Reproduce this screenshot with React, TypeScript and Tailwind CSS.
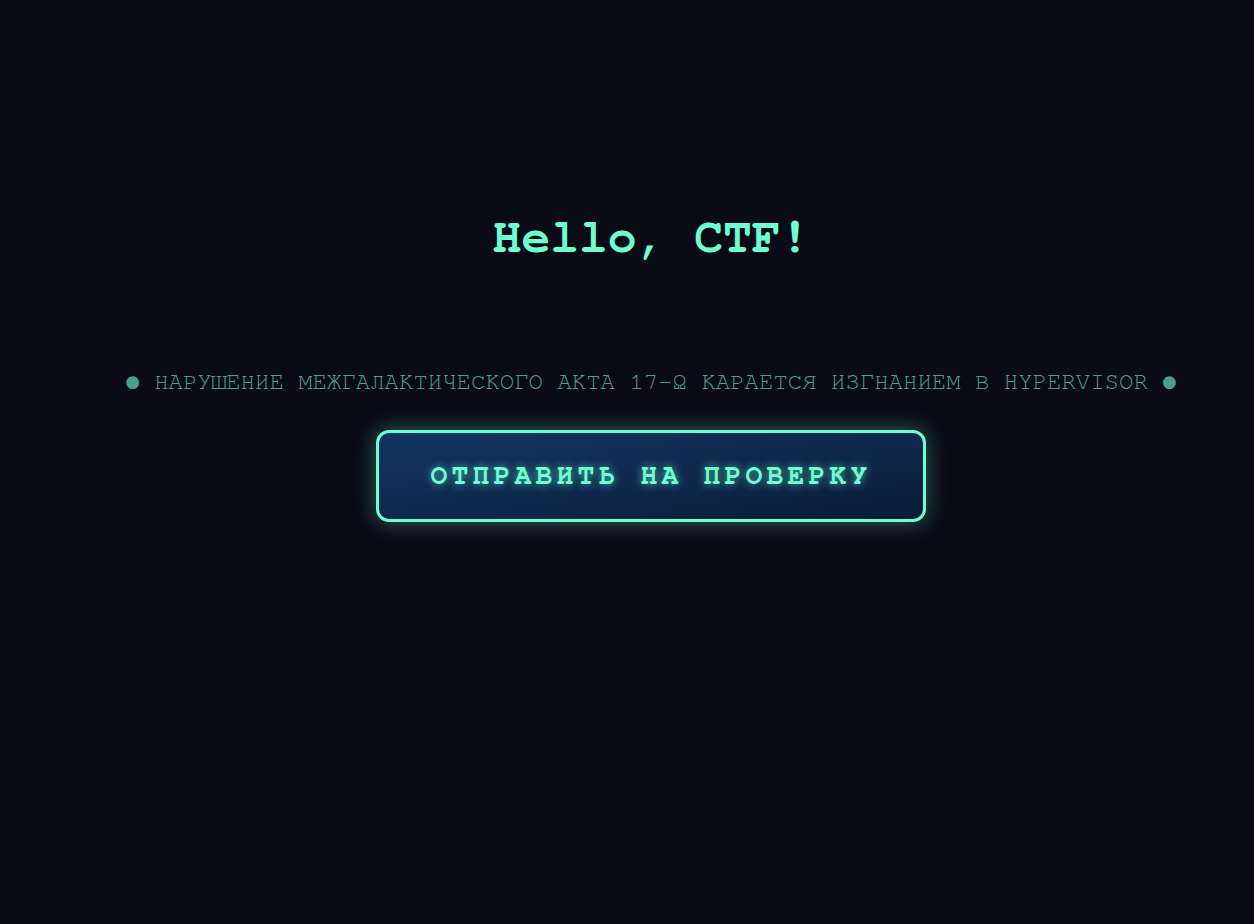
const App = () => {
  return (
    <div className="min-h-screen w-full bg-[#0b0b18] pl-12 font-['Nimbus_Mono_PS','FreeMono','Courier_New',monospace]">
      <div className="flex flex-col items-center pt-[208px]">
        <h1 className="text-[48px] leading-[60px] font-bold text-[#6effd0]">Hello, CTF!</h1>

        <p className="mt-[99px] text-[24px] leading-[30px] text-[#48a28b] whitespace-nowrap">
          ● НАРУШЕНИЕ МЕЖГАЛАКТИЧЕСКОГО АКТА 17-Ω КАРАЕТСЯ ИЗГНАНИЕМ В HYPERVISOR ●
        </p>

        <button className="mt-[33px] w-[550px] h-[92px] rounded-[13px] border-[3px] border-[#6effd0] bg-gradient-to-br from-[#133563] to-[#0b1d38] shadow-[0_0_22px_rgba(110,255,208,0.35)] text-[28px] font-bold tracking-[0.15em] text-[#6effd0] [text-shadow:0_0_8px_rgba(110,255,208,0.7)]">
          ОТПРАВИТЬ НА ПРОВЕРКУ
        </button>
      </div>
    </div>
  );
};

export default App;
